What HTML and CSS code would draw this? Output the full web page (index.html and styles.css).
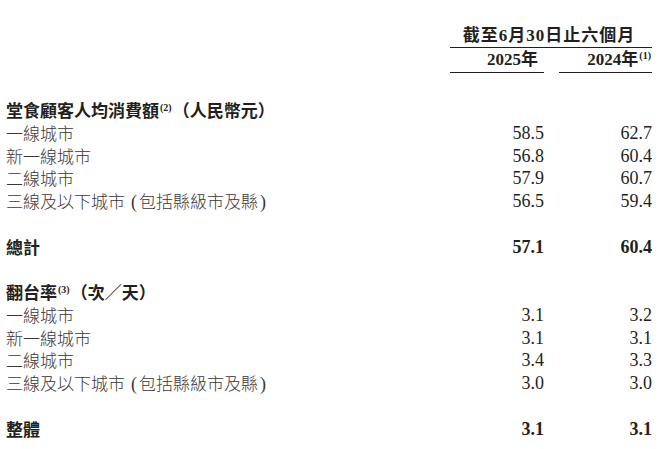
FILE: index.html
```html
<!DOCTYPE html>
<html lang="zh-Hant">
<head>
<meta charset="utf-8">
<link rel="stylesheet" href="styles.css">
</head>
<body>
<div class="sheet">
  <div class="head-row head-top">
    <div class="label"></div>
    <div class="period">截至<span class="n">6</span>月<span class="n">30</span>日止六個月</div>
  </div>
  <div class="head-row head-years">
    <div class="label"></div>
    <div class="year y1"><span class="n">2025</span>年</div>
    <div class="year y2"><span class="n">2024</span>年<sup class="note">(1)</sup></div>
  </div>

  <div class="body">
    <div class="row heading"><div class="label">堂食顧客人均消費額<sup class="note">(2)</sup>（人民幣元）</div><div class="val"></div><div class="val"></div></div>
    <div class="row"><div class="label">一線城市</div><div class="val">58.5</div><div class="val">62.7</div></div>
    <div class="row"><div class="label">新一線城市</div><div class="val">56.8</div><div class="val">60.4</div></div>
    <div class="row"><div class="label">二線城市</div><div class="val">57.9</div><div class="val">60.7</div></div>
    <div class="row"><div class="label">三線及以下城市<span class="paren open">(</span>包括縣級市及縣<span class="paren close">)</span></div><div class="val">56.5</div><div class="val">59.4</div></div>
    <div class="row heading spaced"><div class="label">總計</div><div class="val">57.1</div><div class="val">60.4</div></div>

    <div class="row heading spaced"><div class="label">翻台率<sup class="note">(3)</sup>（次／天）</div><div class="val"></div><div class="val"></div></div>
    <div class="row"><div class="label">一線城市</div><div class="val">3.1</div><div class="val">3.2</div></div>
    <div class="row"><div class="label">新一線城市</div><div class="val">3.1</div><div class="val">3.1</div></div>
    <div class="row"><div class="label">二線城市</div><div class="val">3.4</div><div class="val">3.3</div></div>
    <div class="row"><div class="label">三線及以下城市<span class="paren open">(</span>包括縣級市及縣<span class="paren close">)</span></div><div class="val">3.0</div><div class="val">3.0</div></div>
    <div class="row heading spaced"><div class="label">整體</div><div class="val">3.1</div><div class="val">3.1</div></div>
  </div>
</div>
</body>
</html>
```

FILE: styles.css
```css
html, body {
  margin: 0;
  padding: 0;
  background: #ffffff;
}

.sheet {
  padding: 23px 8px 0 6px;
  color: #231f20;
  font-family: "Noto Sans CJK TC", "Noto Sans CJK SC", sans-serif;
  font-size: 17px;
}

.head-row,
.row {
  display: grid;
  grid-template-columns: 1fr 94px 93px;
  column-gap: 15px;
}

.head-top {
  height: 22px;
  line-height: 22px;
}

.period {
  grid-column: 2 / 4;
  text-align: center;
  font-weight: 700;
  letter-spacing: 1px;
  border-bottom: 1px solid #231f20;
  padding-right: 4px;
}

.head-years {
  height: 25px;
  line-height: 25px;
}

.year {
  text-align: right;
  font-weight: 700;
  border-bottom: 1px solid #231f20;
}

.year.y1 {
  padding-right: 6px;
}

.n {
  font-family: "Liberation Serif", serif;
  font-weight: 700;
}

.note {
  font-family: "Liberation Serif", serif;
  font-size: 10px;
  font-weight: 700;
  vertical-align: 6px;
  line-height: 0;
  margin: 0 1px;
}

.paren {
  font-family: "Liberation Serif", serif;
  font-size: 18px;
}

.paren.open {
  margin: 0 2px 0 6px;
}

.paren.close {
  margin: 0 0 0 2px;
}

.body {
  margin-top: 29px;
}

.row {
  height: 22.75px;
  line-height: 22.75px;
}

.row .label {
  font-weight: 300;
  color: #3a3637;
  white-space: nowrap;
}

.row .val {
  text-align: right;
  font-family: "Liberation Serif", serif;
  font-size: 18px;
  color: #231f20;
}

.row.heading .label {
  font-weight: 700;
  color: #231f20;
}

.row.heading .val {
  font-weight: 700;
}

.row.spaced {
  margin-top: 22.75px;
}
```
